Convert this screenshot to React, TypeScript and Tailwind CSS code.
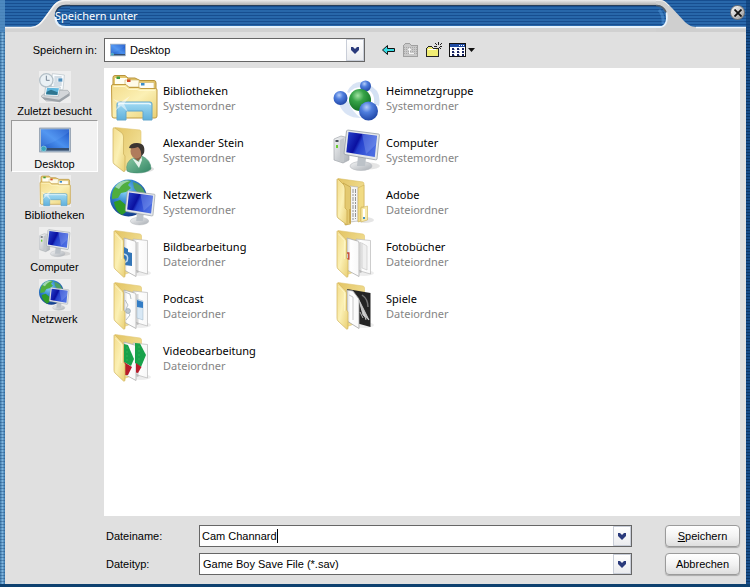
import type { ReactNode } from 'react';
import { clsx } from 'clsx';

const STRIPES = 'bg-[repeating-linear-gradient(to_bottom,#174e90_0px,#174e90_1px,#2867aa_1px,#2867aa_3px)]';

function Gradients() {
  return (
    <svg width="0" height="0" className="absolute" aria-hidden="true">
      <defs>
        <linearGradient id="folderFront" x1="0" y1="0" x2="1" y2="1">
          <stop offset="0" stopColor="#f3dc8c" />
          <stop offset="0.5" stopColor="#fbf0b4" />
          <stop offset="1" stopColor="#e9cf74" />
        </linearGradient>
        <linearGradient id="folderBack" x1="0" y1="0" x2="1" y2="1">
          <stop offset="0" stopColor="#e3c463" />
          <stop offset="1" stopColor="#f7eaa9" />
        </linearGradient>
        <linearGradient id="screen" x1="0" y1="0" x2="1" y2="0.4">
          <stop offset="0" stopColor="#2a48d0" />
          <stop offset="0.45" stopColor="#0a10a0" />
          <stop offset="0.55" stopColor="#2440cc" />
          <stop offset="1" stopColor="#4a6ce2" />
        </linearGradient>
        <linearGradient id="desk" x1="0" y1="1" x2="1" y2="0">
          <stop offset="0" stopColor="#1c55c0" />
          <stop offset="0.5" stopColor="#4a90ee" />
          <stop offset="1" stopColor="#1f55c6" />
        </linearGradient>
        <linearGradient id="metal" x1="0" y1="0" x2="1" y2="1">
          <stop offset="0" stopColor="#f4f5f6" />
          <stop offset="1" stopColor="#a9aeb4" />
        </linearGradient>
        <linearGradient id="glass" x1="0" y1="0" x2="0" y2="1">
          <stop offset="0" stopColor="#a5dcf3" />
          <stop offset="1" stopColor="#5eb0dc" />
        </linearGradient>
        <linearGradient id="paper" x1="0" y1="0" x2="1" y2="0">
          <stop offset="0" stopColor="#dcdcdc" />
          <stop offset="0.3" stopColor="#ffffff" />
          <stop offset="1" stopColor="#f8f8f8" />
        </linearGradient>
        <radialGradient id="globe" cx="0.4" cy="0.3" r="0.75">
          <stop offset="0" stopColor="#8fd8f8" />
          <stop offset="0.45" stopColor="#2f82cf" />
          <stop offset="1" stopColor="#0f3484" />
        </radialGradient>
        <radialGradient id="ballBlue" cx="0.4" cy="0.3" r="0.7">
          <stop offset="0" stopColor="#b5cdf8" />
          <stop offset="0.4" stopColor="#4f7ede" />
          <stop offset="1" stopColor="#2148a8" />
        </radialGradient>
        <radialGradient id="ballGreen" cx="0.4" cy="0.3" r="0.7">
          <stop offset="0" stopColor="#a2e2a2" />
          <stop offset="0.4" stopColor="#36a347" />
          <stop offset="1" stopColor="#127023" />
        </radialGradient>
        <linearGradient id="shirt" x1="0" y1="0" x2="1" y2="1">
          <stop offset="0" stopColor="#8bcba6" />
          <stop offset="1" stopColor="#318463" />
        </linearGradient>
      </defs>
    </svg>
  );
}

type IconProps = { className?: string };

function Icon({ className = 'size-12', children }: IconProps & { children: ReactNode }) {
  return (
    <svg viewBox="0 0 48 48" className={clsx('shrink-0', className)} aria-hidden="true">
      {children}
    </svg>
  );
}

function LibrariesIcon({ className }: IconProps) {
  return (
    <Icon className={className}>
      <path d="M3 8V3.500Q3 1.500 5 1.500H15L18 4H25L30 6.500H44Q46 6.500 46 9V41H3Z" fill="#e4c66c" stroke="#b7933c" />
      <path d="M5 4h12v7H5z" fill="#fffef2" />
      <path d="M15 6h14v7H15z" fill="#fffbe9" stroke="#cbb266" strokeWidth=".6" />
      <rect x="6.500" y="2.500" width="3.500" height="2.500" fill="#3d9c3e" />
      <rect x="17" y="5.500" width="3.500" height="2.500" fill="#d14a25" />
      <path d="M29 8.500h15v7H29z" fill="#fffdf5" stroke="#cbb266" strokeWidth=".6" />
      <rect x="31" y="9" width="3.500" height="2.500" fill="#398ccb" />
      <path d="M1.500 12Q1.500 10.500 3 10.500H16L19 13.500H28L31 14.500H45.500Q47 14.500 47 16V42Q47 44 45 44H4Q2 44 2 42Z" fill="url(#folderFront)" stroke="#c19c42" />
      <path d="M3.500 12.500H15L18.500 15.500H27L30 16.500H45" fill="none" stroke="#fff7c9" />
      <path d="M7 30Q7 28 9 28H40Q42 28 42 30V46H33V38Q33 37 32 37H17Q16 37 16 38V46H7Z" fill="url(#glass)" stroke="#62a6cb" />
      <path d="M8.500 31Q8.500 29.500 10 29.500H39Q40.500 29.500 40.500 31" fill="none" stroke="#e4f7fd" strokeWidth="1.300" />
      <path d="M3 25L11 28L20 22L14 30L18 38L11 32L5 37L9 30Z" fill="#fff" opacity=".5" />
    </Icon>
  );
}

function Folder({ children, className }: IconProps & { children?: ReactNode }) {
  return (
    <Icon className={className}>
      <ellipse cx="31" cy="43" rx="10" ry="3" fill="#000" opacity=".07" />
      <path d="M5 .5L30 4Q31.500 4.500 31.500 6V38L13 45L5 4Z" fill="url(#folderBack)" stroke="#e0c673" strokeWidth=".6" />
      {children}
      <path d="M4 1.500Q4 .5 5.500 1.500L12 8.500Q13.500 10 13.500 12V28L15 30V46Q15 47.500 13.500 47L5 39Q4 38 4 36Z" fill="url(#folderFront)" stroke="#d2b55d" strokeWidth=".7" />
      <path d="M5.500 4L11.500 10.500V29" fill="none" stroke="#fff8d0" strokeWidth=".8" opacity=".8" />
    </Icon>
  );
}

function Pages() {
  return (
    <>
      <path d="M23 9L37.500 10.500V44L24 40Z" fill="url(#paper)" stroke="#b9b9b9" strokeWidth=".7" />
      <path d="M27.500 12V43" stroke="#000" strokeWidth="2" opacity=".15" />
      <path d="M14 8L24.500 11Q26 11.500 26 13V46.500L14 40Z" fill="url(#paper)" stroke="#adadad" strokeWidth=".8" />
    </>
  );
}

function ImagesFolder() {
  return (
    <Folder>
      <Pages />
      <path d="M14 17L18 19V22L22 23V36L14 35Z" fill="#3476b7" />
      <path d="M14 24Q19 25 17 31L14 33" fill="none" stroke="#c2dcf2" strokeWidth="1.500" />
    </Folder>
  );
}

function PodcastFolder() {
  return (
    <Folder>
      <Pages />
      <path d="M27 17L33 19V38L27 36Z" fill="#d8e8f5" stroke="#9db5c7" strokeWidth=".5" />
      <path d="M27 18L33 20V26L27 25Z" fill="#347dc5" />
      <path d="M15 10L20 12L21 17M15 18L18 23L16 27L20 33L16 38" fill="none" stroke="#a4b0b8" strokeWidth=".8" />
      <circle cx="18" cy="29" r="2.500" fill="#bdc9d1" stroke="#8799a6" strokeWidth=".5" />
    </Folder>
  );
}

function VideoFolder() {
  return (
    <Folder>
      <Pages />
      <path d="M25 9L30 9.500L36 21L31 33L25 29Z" fill="#18a24a" />
      <path d="M26 29L31.500 33L28 39L26 38.500Z" fill="#b71c2a" />
      <path d="M14 10L18 11L24 25L21 32L14 28Z" fill="#18a24a" />
      <path d="M14 28L22 33L18 41L14 41Z" fill="#b71c2a" />
      <path d="M17 13v14M29 12v16" stroke="#3db85f" strokeDasharray="2 2" strokeWidth=".7" />
    </Folder>
  );
}

function PhotoBookFolder() {
  return (
    <Folder>
      <Pages />
      <path d="M29 13L34 16V40L29 38Z" fill="#f0f0f0" stroke="#c5c5c5" strokeWidth=".6" />
      <path d="M14 23h1.800v6h-2" fill="none" stroke="#c64a38" strokeWidth="1.400" />
    </Folder>
  );
}

function GamesFolder() {
  return (
    <Folder>
      <path d="M14 7L37.500 11V45L16 39Z" fill="#242424" />
      <path d="M26 18L36 38L30 33ZM27 30L30 36M30 29L33 38" fill="#bcbcbc" stroke="#d9d9d9" strokeWidth=".8" />
      <path d="M29 13Q35 17 35 25" fill="none" stroke="#737373" strokeWidth="1.500" />
      <path d="M14 8L20 9L26 17V46.500L14 39Z" fill="url(#paper)" stroke="#a5a5a5" strokeWidth=".8" />
      <path d="M16 13L20 15V38" fill="none" stroke="#c7c7c7" />
    </Folder>
  );
}

function AdobeFolder() {
  return (
    <Icon>
      <ellipse cx="32" cy="42" rx="9" ry="3" fill="#000" opacity=".1" />
      <path d="M5 .5L30 4Q31 4.500 31 6V40L13 45L5 4Z" fill="url(#folderBack)" stroke="#d9bd62" strokeWidth=".6" />
      <path d="M17 8L25 9V43L17 44Z" fill="#f4f4f4" stroke="#ababab" strokeWidth=".6" />
      <path d="M20 11V42M22.500 11V41" stroke="#8a8a8a" strokeWidth=".9" strokeDasharray="4 1 2 1" />
      <path d="M25 10L31 7V29H28V43L25 44Z" fill="#f1db83" stroke="#cdb057" strokeWidth=".6" />
      <path d="M28 30L34.500 28V42L28 44Z" fill="#f8eaaa" stroke="#cfb158" strokeWidth=".6" />
      <rect x="30" y="31" width="2" height="8" fill="#fff" />
      <rect x="30" y="39" width="2" height="2" fill="#4795c6" />
      <path d="M10 5L17.500 9V46L12 47Z" fill="#e3c970" stroke="#b8983d" strokeWidth=".6" />
      <path d="M4 1.500Q4 .5 5.500 1.500L11 7Q12 9 12 11V30L14 32V47L5 40Q4 39 4 37Z" fill="url(#folderFront)" stroke="#c7a74c" strokeWidth=".7" />
      <path d="M17 31V45" stroke="#c3a044" strokeWidth="1.500" />
    </Icon>
  );
}

function UserFolder() {
  return (
    <Icon>
      <ellipse cx="31" cy="43" rx="13" ry="3.500" fill="#000" opacity=".12" />
      <path d="M5 1.500L30 4Q31 4.500 31 6V38L13 45L5 4Z" fill="url(#folderBack)" stroke="#e0c673" strokeWidth=".6" />
      <path d="M3 3Q3 1 5 2L12 7Q13.500 9 13.500 11V28L15 30V44Q15 46 13.500 45.500L4 38Q3 37 3 35Z" fill="url(#folderFront)" stroke="#cbb05c" strokeWidth=".7" />
      <path d="M17 45Q15 36 23 32L32 30Q41 34 41 43Q37 47 27 47Q20 47 17 45Z" fill="url(#shirt)" stroke="#448b6f" strokeWidth=".5" />
      <path d="M22 32L29 36L31 29L32 34L29 42Z" fill="#e8f3ec" />
      <path d="M24 26H31V32L28 35L24 32Z" fill="#8c5d42" />
      <ellipse cx="26.500" cy="25" rx="6" ry="7.500" fill="#b07c5c" />
      <path d="M19 22Q20 17 27 17Q36 17 34 27L31 31Q32 24 28 21Q23 23 19 22Z" fill="#3c3632" />
    </Icon>
  );
}

function Monitor() {
  return (
    <>
      <ellipse cx="28" cy="40" rx="11" ry="4.500" fill="url(#metal)" stroke="#b5b9bd" strokeWidth=".6" />
      <path d="M25 30L33 32L32 40H24Z" fill="#bcc2c8" />
      <path d="M14.500 4L45.500 8Q46.500 8.200 46.400 9L44 33Q43.800 34 42.500 33.800L12 28.500Q11 28.300 11.100 27L13.500 5Z" fill="#e5e8ea" stroke="#969ea5" strokeWidth=".8" />
      <path d="M15.500 6L44 9.800L41.800 31L13.300 26.200Z" fill="url(#screen)" />
      <path d="M29 8L43.500 10L42.500 19L33 28Z" fill="#9fb6f6" opacity=".3" />
    </>
  );
}

function ComputerIcon({ className }: IconProps) {
  return (
    <Icon className={className}>
      <ellipse cx="35" cy="40" rx="12" ry="3.500" fill="#000" opacity=".1" />
      <path d="M1 13L8 10L16 12V34L10 37L1 34Z" fill="url(#metal)" stroke="#a3a8ad" strokeWidth=".7" />
      <path d="M7 14L11 12V36L7 36Z" fill="#c3c7ca" />
      <path d="M2.500 15H5.500" stroke="#4c545b" strokeWidth="2" />
      <rect x="3" y="19" width="2" height="3" fill="#6ace31" />
      <Monitor />
    </Icon>
  );
}

function NetworkIcon({ className }: IconProps) {
  return (
    <Icon className={className}>
      <circle cx="18.500" cy="20" r="18.500" fill="url(#globe)" />
      <path d="M9 5Q15 1 21 3L18 7L21 10L16 14L11 15L8 20L2 21Q1 11 9 5Z" fill="#4fae3f" />
      <path d="M23 4Q32 6 35 15L31 17L27 14L24 10Z" fill="#4f9f62" />
      <path d="M4 24L10 22L16 27L16 34L12 37Q5 33 4 24Z" fill="#2f9a27" />
      <path d="M5 9Q11 1 20 3Q12 5 9 11Z" fill="#d3f0f8" opacity=".6" />
      <g transform="translate(6 9.500) scale(.84)">
        <Monitor />
      </g>
    </Icon>
  );
}

function HomegroupIcon() {
  return (
    <Icon>
      <path d="M6 30Q11 44 28 44Q19 38 15 27Z" fill="#c9d9f1" opacity=".7" />
      <path d="M14 18Q20 6 31 8L29 13Q20 13 16 19Z" fill="#c9d9f1" opacity=".7" />
      <path d="M36 11Q49 16 46 32L41 30Q42 20 36 16Z" fill="#c9d9f1" opacity=".8" />
      <circle cx="32.500" cy="12" r="5.500" fill="url(#ballBlue)" />
      <circle cx="7.500" cy="24" r="7" fill="url(#ballBlue)" />
      <circle cx="27" cy="26" r="11" fill="url(#ballGreen)" />
      <circle cx="35.500" cy="37" r="9.500" fill="url(#ballBlue)" />
    </Icon>
  );
}

function DesktopIcon({ className }: IconProps) {
  return (
    <Icon className={className}>
      <rect x="1" y="6" width="46" height="36" fill="#aebfd2" stroke="#7c8ca0" />
      <rect x="3" y="8" width="42" height="31" fill="url(#desk)" />
      <path d="M3 33Q22 30 45 12V8H3Z" fill="#78b3ff" opacity=".2" />
      <rect x="3" y="36" width="42" height="4" fill="#344e70" />
      <circle cx="7" cy="37" r="4" fill="#3aa5bd" stroke="#b8e7ec" strokeWidth=".8" />
    </Icon>
  );
}

function RecentIcon({ className }: IconProps) {
  return (
    <Icon className={className}>
      <path d="M3 38L14 29H43L46 33L30 45H11Z" fill="#d3d6d9" stroke="#979da2" strokeWidth=".8" />
      <path d="M4 39L30 43L46 33V37L31 47L8 43Z" fill="#9da3a9" />
      <path d="M20 4L38 6L36 28L18 27Z" fill="#fafdff" stroke="#a9b5bd" strokeWidth=".8" />
      <path d="M23 9H34M23 12H28M23 15H28M22 18H34M22 21H34" stroke="#8aa0b4" />
      <rect x="29" y="11" width="6" height="5" fill="#508fbd" />
      <path d="M10 23L32 24L29 38L8 37Z" fill="#f6fafc" stroke="#93a3ac" strokeWidth=".8" />
      <path d="M12 25L30 26L27.500 36L10.500 35Z" fill="#5fb5dc" />
      <path d="M11.500 31L18 28L28 32L27.500 36L10.500 35Z" fill="#2d7590" />
      <circle cx="11" cy="14" r="10" fill="#eaf1f5" stroke="#b4c0c8" strokeWidth="2" />
      <path d="M11 7V14H16" fill="none" stroke="#68798a" strokeWidth="1.300" />
    </Icon>
  );
}

function Chevron() {
  return (
    <svg viewBox="0 0 8 7" width="8" height="7" aria-hidden="true">
      <path d="M0 0H2L4 2L6 0H8V3L4 7L0 3Z" fill="#2b3b7c" />
    </svg>
  );
}

const dropClass =
  'flex w-[18px] items-center justify-center border border-[#c9ced8] bg-linear-to-b from-white to-[#ebecef]';
const fieldClass = 'relative flex border border-[#666] bg-white';
const buttonClass =
  'h-[22px] w-[75px] shrink-0 rounded-sm border border-[#9b9b9b] bg-linear-to-b from-white via-[#f3f3f3] to-[#dedede] shadow-[0_1px_1px_#aaa]';

const places = [
  { name: 'Zuletzt besucht', icon: RecentIcon },
  { name: 'Desktop', icon: DesktopIcon, active: true },
  { name: 'Bibliotheken', icon: LibrariesIcon },
  { name: 'Computer', icon: ComputerIcon },
  { name: 'Netzwerk', icon: NetworkIcon },
];

const entries = [
  { name: 'Bibliotheken', type: 'Systemordner', icon: LibrariesIcon },
  { name: 'Heimnetzgruppe', type: 'Systemordner', icon: HomegroupIcon },
  { name: 'Alexander Stein', type: 'Systemordner', icon: UserFolder },
  { name: 'Computer', type: 'Systemordner', icon: ComputerIcon },
  { name: 'Netzwerk', type: 'Systemordner', icon: NetworkIcon },
  { name: 'Adobe', type: 'Dateiordner', icon: AdobeFolder },
  { name: 'Bildbearbeitung', type: 'Dateiordner', icon: ImagesFolder },
  { name: 'Fotobücher', type: 'Dateiordner', icon: PhotoBookFolder },
  { name: 'Podcast', type: 'Dateiordner', icon: PodcastFolder },
  { name: 'Spiele', type: 'Dateiordner', icon: GamesFolder },
  { name: 'Videobearbeitung', type: 'Dateiordner', icon: VideoFolder },
];

function TitleBar() {
  return (
    <header className={clsx('relative flex h-8', STRIPES)}>
      <svg width="70" height="32" className="shrink-0" aria-hidden="true">
        <rect width="5" height="32" fill="#5d98c9" opacity=".7" />
        <path d="M5 27H31C38 27 41 22 44 18L53 6C56 2 59 0 65 0H70V32H5Z" fill="#d3d3d3" />
        <path d="M5 27.500H31C38 27.500 42 22 45 18L53 7C56 3 59 .5 65 .5H70" fill="none" stroke="#f4f4f4" strokeWidth="1.500" />
        <path d="M70 5H66C59 5 55 10 55 16C55 23 59 27 66 27H70Z" fill="#2867aa" />
        <path d="M58 8.500H70M56 11.500H70M55.500 14.500H70M55.500 17.500H70M56 20.500H70M58 23.500H70" stroke="#174e90" />
        <path d="M70 5.500H66C59 5.500 55.500 10 55.500 16" fill="none" stroke="#263e59" strokeWidth="1.500" />
        <path d="M55.500 17C55.500 23 59 27 66 27H70" fill="none" stroke="#e6f2fc" strokeWidth="2" />
      </svg>
      <div className="flex flex-1 flex-col">
        <div className="h-[5px] bg-linear-to-b from-[#ededed] to-[#b0b0b0]" />
        <div className="h-[21px] border-t border-[#263e59]" />
        <div className="h-0.5 bg-[#e6f2fc]" />
        <div className="h-1 bg-[#d1d1d1]" />
      </div>
      <svg width="94" height="32" className="shrink-0" aria-hidden="true">
        <path d="M0 0H5C9 0 12 4 16 8L28 21C33 26 36 27 43 27H90V32H0Z" fill="#cfcfcf" />
        <path d="M0 .5H4C8 .5 10 3 13 6" fill="none" stroke="#eee" />
        <path d="M40 27.500H90" fill="none" stroke="#eef5fc" strokeWidth="1.500" />
        <path d="M0 5H1C7 5 11 11 11 18C11 24 8 27 4 27H0Z" fill="#2867aa" />
        <path d="M0 6.500H5M0 9.500H7M0 12.500H8M0 15.500H9M0 18.500H10M0 21.500H10M0 24.500H8" stroke="#174e90" />
        <path d="M3 10Q8 15 7 24" fill="none" stroke="#5da4e5" strokeWidth="3" opacity=".4" />
        <path d="M0 5.500H1C5 5.500 8 8 10 12" fill="none" stroke="#525d68" strokeWidth="1.500" />
        <path d="M10.500 13C12 22 9 27 4 27H0" fill="none" stroke="#e6f2fc" strokeWidth="1.800" />
        <rect x="90" width="4" height="32" fill="#0c396e" opacity=".6" />
      </svg>
      <h1 className="absolute top-2 left-[55px] font-['Noto_Sans',sans-serif] text-[11px] leading-4 text-white">
        Speichern unter
      </h1>
      <button
        type="button"
        aria-label="Schließen"
        className="absolute top-[5px] right-[5px] flex size-[15px] items-center justify-center rounded-full border border-[#727272] bg-linear-to-br from-white to-[#999]"
      >
        <svg viewBox="0 0 8 8" width="8" height="8" aria-hidden="true">
          <path d="M.5 .5L7.500 7.500M7.500 .5L.5 7.500" stroke="#111" strokeWidth="1.800" />
        </svg>
      </button>
    </header>
  );
}

function Toolbar() {
  return (
    <div className="ml-4 flex items-center gap-[7px]">
      <button type="button" aria-label="Zurück">
        <svg width="14" height="16" aria-hidden="true">
          <path d="M1.500 8L6.500 3.500V6.500H13.500V9.500H6.500V12.500Z" fill="#38dce4" stroke="#111" />
        </svg>
      </button>
      <button type="button" aria-label="Übergeordneter Ordner" disabled>
        <svg width="17" height="16" shapeRendering="crispEdges" aria-hidden="true">
          <path d="M1.500 14.500V3.500L3.500 1.500H7.500L9.500 3.500H15.500V14.500Z" fill="#c9c9c9" stroke="#a0a0a0" />
          <path d="M2 5.500H15M2 7.500H15M2 9.500H15M2 11.500H15" stroke="#a8a8a8" strokeDasharray="1 1" />
          <path d="M7.500 11V6M6 7.500H9M7 11.500H12" fill="none" stroke="#f4f4f4" />
        </svg>
      </button>
      <button type="button" aria-label="Neuer Ordner">
        <svg width="16" height="16" shapeRendering="crispEdges" aria-hidden="true">
          <path d="M.5 14.500V6.500L2.500 4.500H5.500L7.500 6.500H12.500V14.500Z" fill="#f1ed73" stroke="#222" />
          <path d="M12.500 0V3M12.500 6V9M8 4.500H11M14 4.500H16M9.500 1.500L11.500 3.500M15.500 1.500L13.500 3.500M13.500 5.500L15.500 7.500" stroke="#222" />
          <path d="M2 7.500H10" stroke="#fff" />
        </svg>
      </button>
      <button type="button" aria-label="Ansicht" className="flex items-center gap-0.5">
        <svg width="17" height="16" shapeRendering="crispEdges" aria-hidden="true">
          <rect x=".5" y="1.500" width="16" height="13" fill="#fff" stroke="#111" />
          <rect x="1" y="2" width="15" height="3" fill="#1e4aa3" />
          <path d="M10 3.500H15" stroke="#fff" strokeDasharray="1 1" />
          <path d="M3 7H15M3 10H15M3 13H15" stroke="#182461" strokeWidth="2" strokeDasharray="2 3" />
          <path d="M5 7.500H15M5 10.500H15M5 13.500H15" stroke="#9aa3c4" strokeDasharray="1 4" />
        </svg>
        <svg width="7" height="4" aria-hidden="true">
          <path d="M0 0H7L3.500 4Z" fill="#111" />
        </svg>
      </button>
    </div>
  );
}

export default function App() {
  return (
    <div className="flex min-h-screen flex-col bg-[#e0e0e0] font-['Liberation_Sans',sans-serif] text-[11px] leading-[14px] text-black">
      <Gradients />
      <TitleBar />
      <div className="flex flex-1">
        <div className="w-[5px] shrink-0 bg-[repeating-linear-gradient(to_bottom,#0b386b55_0px,#0b386b55_1px,transparent_1px,transparent_3px),linear-gradient(to_right,#3c78ab,#7db3dc,#3b78ac)]" />
        <main className="flex min-w-0 flex-1 flex-col">
          <div className="flex h-9 items-center">
            <label htmlFor="folder" className="w-[92px] shrink-0 text-right">
              Speichern in:
            </label>
            <div className={clsx(fieldClass, 'ml-[7px] h-6 w-[261px]')}>
              <DesktopIcon className="pointer-events-none absolute top-[3px] left-[5px] size-4" />
              <select id="folder" className="w-full appearance-none pl-[25px] outline-none">
                <option>Desktop</option>
              </select>
              <span className={clsx(dropClass, 'pointer-events-none absolute inset-y-0 right-0')}>
                <Chevron />
              </span>
            </div>
            <Toolbar />
          </div>

          <div className="flex flex-1">
            <nav className="w-[99px] shrink-0 px-1.5">
              {places.map(({ name, icon: PlaceIcon, active }) => (
                <button
                  key={name}
                  type="button"
                  className={clsx(
                    'flex h-[52px] w-full flex-col items-center border whitespace-nowrap',
                    active
                      ? 'border-[#999] border-r-white border-b-white bg-[#f1f1f1] pt-[3px]'
                      : 'border-transparent pt-0.5',
                  )}
                >
                  <PlaceIcon className={clsx('size-8', !active && 'bg-[#eeeeee]')} />
                  <span className="mt-px">{name}</span>
                </button>
              ))}
            </nav>
            <ul className="mr-1.5 grid flex-1 auto-rows-[52px] grid-cols-[repeat(auto-fill,223px)] content-start bg-white pt-1.5 pl-1.5">
              {entries.map(({ name, type, icon: EntryIcon }) => (
                <li key={name} className="flex gap-[5px] font-['Noto_Sans',sans-serif] leading-[15px]">
                  <EntryIcon />
                  <div className="pt-[9px]">
                    <p>{name}</p>
                    <p className="text-[#858585]">{type}</p>
                  </div>
                </li>
              ))}
            </ul>
          </div>

          <div className="flex flex-col gap-1.5 py-[9px] pr-1.5 pl-[101px]">
            <div className="flex items-center">
              <label htmlFor="filename" className="w-[93px] shrink-0">
                Dateiname:
              </label>
              <div className={clsx(fieldClass, 'mr-[33px] h-[22px] flex-1')}>
                <div className="flex flex-1 items-center">
                  <input
                    id="filename"
                    defaultValue="Cam Channard"
                    className="field-sizing-content pl-0.5 caret-transparent outline-none"
                  />
                  <span className="h-[14px] w-px bg-black" />
                </div>
                <button type="button" aria-label="Letzte Dateinamen" className={dropClass}>
                  <Chevron />
                </button>
              </div>
              <button type="button" className={buttonClass}>
                <u>S</u>peichern
              </button>
            </div>
            <div className="flex items-center">
              <label htmlFor="filetype" className="w-[93px] shrink-0">
                Dateityp:
              </label>
              <div className={clsx(fieldClass, 'mr-[33px] h-[22px] flex-1')}>
                <select id="filetype" className="w-full appearance-none pl-[3px] outline-none">
                  <option>Game Boy Save File (*.sav)</option>
                </select>
                <span className={clsx(dropClass, 'pointer-events-none absolute inset-y-0 right-0')}>
                  <Chevron />
                </span>
              </div>
              <button type="button" className={buttonClass}>
                Abbrechen
              </button>
            </div>
          </div>
        </main>
        <div className="w-1 shrink-0 bg-[repeating-linear-gradient(to_bottom,#0b3769_0px,#0b3769_1px,#194f8b_1px,#194f8b_3px)]" />
      </div>
      <div className="h-[3px] bg-[#0e416f]" />
    </div>
  );
}
